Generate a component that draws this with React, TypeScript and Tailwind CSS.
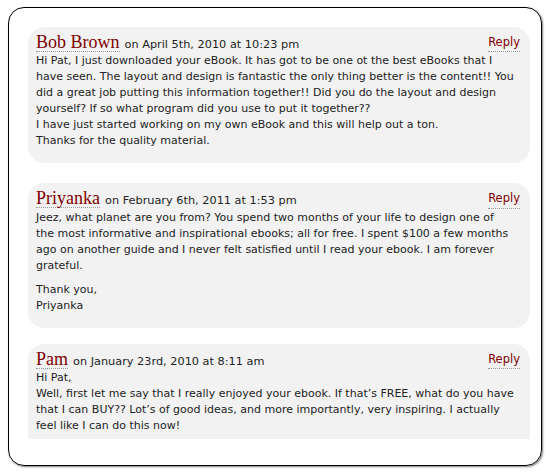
const comments = [
  {
    name: 'Bob Brown',
    date: 'on April 5th, 2010 at 10:23 pm',
    paras: [
      [
        'Hi Pat, I just downloaded your eBook. It has got to be one ot the best eBooks that I',
        'have seen. The layout and design is fantastic the only thing better is the content!! You',
        'did a great job putting this information together!! Did you do the layout and design',
        'yourself? If so what program did you use to put it together??',
        'I have just started working on my own eBook and this will help out a ton.',
        'Thanks for the quality material.',
      ],
    ],
  },
  {
    name: 'Priyanka',
    date: 'on February 6th, 2011 at 1:53 pm',
    paras: [
      [
        'Jeez, what planet are you from? You spend two months of your life to design one of',
        'the most informative and inspirational ebooks; all for free. I spent $100 a few months',
        'ago on another guide and I never felt satisfied until I read your ebook. I am forever',
        'grateful.',
      ],
      ['Thank you,', 'Priyanka'],
    ],
  },
  {
    name: 'Pam',
    date: 'on January 23rd, 2010 at 8:11 am',
    paras: [
      [
        'Hi Pat,',
        'Well, first let me say that I really enjoyed your ebook. If that\u2019s FREE, what do you have',
        'that I can BUY?? Lot\u2019s of good ideas, and more importantly, very inspiring. I actually',
        'feel like I can do this now!',
      ],
    ],
  },
];

function Comment({ c, last }: { c: (typeof comments)[number]; last?: boolean }) {
  return (
    <div
      className={
        'bg-[#f2f2f2] pl-2 pr-[10px] pt-[6px] ' +
        (last ? 'rounded-t-[16px] pb-[5px]' : 'rounded-[16px] pb-[6px]')
      }
    >
      <div className="flex items-baseline justify-between -mb-px">
        <div className="flex items-baseline">
          <span className="font-['Liberation_Serif',serif] text-[18px] leading-[18px] text-[#800000] border-b border-dotted border-[#999]">
            {c.name}
          </span>
          <span className="ml-[5px] text-[11.3px] text-[#222]">{c.date}</span>
        </div>
        <a className="text-[11.5px] text-[#800000] border-b border-dotted border-[#999] relative -top-[2px]">
          Reply
        </a>
      </div>
      <div className="text-[11px] leading-4 text-[#222] whitespace-nowrap">
        {c.paras.map((p, i) => (
          <p key={i} className={last ? '' : 'mb-2'}>
            {p.map((line, j) => (
              <span key={j}>
                {line}
                {j < p.length - 1 && <br />}
              </span>
            ))}
          </p>
        ))}
      </div>
    </div>
  );
}

export default function App() {
  return (
    <div className="bg-white w-[552px] h-[475px] pt-[7px] pl-[8px] font-['DejaVu_Sans',sans-serif]">
      <div className="w-[534px] h-[459px] border-[1.5px] border-black rounded-[16px] shadow-[1px_1px_2px_rgba(0,0,0,0.5)] pt-[19px] pl-[19px] pr-[11px] overflow-hidden">
        <div className="flex flex-col">
          <Comment c={comments[0]} />
          <div className="h-5" />
          <Comment c={comments[1]} />
          <div className="h-4" />
          <Comment c={comments[2]} last />
        </div>
      </div>
    </div>
  );
}
